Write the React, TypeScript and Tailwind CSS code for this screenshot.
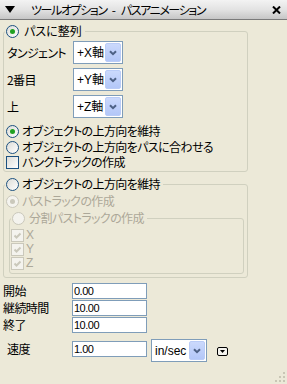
import React from "react";

const JP = "font-['Noto_Sans_CJK_JP',sans-serif] [font-feature-settings:'palt']";
const LAT = "font-['Liberation_Sans','Noto_Sans_CJK_JP',sans-serif]";

function Radio({ checked = false, disabled = false }: { checked?: boolean; disabled?: boolean }) {
  return (
    <span
      className={`w-[13px] h-[13px] rounded-full border shrink-0 flex items-center justify-center ${
        disabled
          ? "border-[#CAC8BB] bg-[#F4F3EE]"
          : "border-[#1C5180] bg-gradient-to-br from-[#DCDCD7] to-white"
      }`}
    >
      {checked && (
        <span
          className={`w-[5px] h-[5px] rounded-full ${disabled ? "bg-[#CAC8BB]" : "bg-[#21A121]"}`}
        />
      )}
    </span>
  );
}

function Check({ checked = false, disabled = false }: { checked?: boolean; disabled?: boolean }) {
  return (
    <span
      className={`w-[13px] h-[13px] border shrink-0 flex items-center justify-center ${
        disabled
          ? "border-[#CAC8BB] bg-[#F4F3EE]"
          : "border-[#1C5180] bg-gradient-to-br from-[#DCDCD7] to-white"
      }`}
    >
      {checked && (
        <svg width="9" height="9" viewBox="0 0 9 9">
          <path
            d="M1.5 4.5 L3.5 6.5 L7.5 2.5"
            fill="none"
            stroke={disabled ? "#CAC8BB" : "#21A121"}
            strokeWidth="2"
          />
        </svg>
      )}
    </span>
  );
}

function DropBtn() {
  return (
    <span className="w-[16px] rounded-[2px] border border-[#BACCF7] bg-gradient-to-b from-[#CBD9FC] to-[#B3C7F8] flex items-center justify-center">
      <svg width="8" height="6" viewBox="0 0 8 6">
        <path d="M1 1.2 L4 4.2 L7 1.2" fill="none" stroke="#4D6185" strokeWidth="2" />
      </svg>
    </span>
  );
}

function Select({ label, width }: { label: string; width: string }) {
  return (
    <div className={`${width} h-[23px] border border-[#7F9DB9] bg-white flex items-stretch p-[1px]`}>
      <span className={`flex-1 pl-[2px] flex items-center text-[12px] tracking-normal text-black ${LAT}`}>{label}</span>
      <DropBtn />
    </div>
  );
}

function Field({ value }: { value: string }) {
  return (
    <div className={`w-[75px] h-[16px] border border-[#7F9DB9] bg-white flex items-center pl-[1px] text-[11px] tracking-[-0.5px] leading-none text-black ${LAT}`}>
      {value}
    </div>
  );
}

export default function App() {
  return (
    <div className={`w-[287px] h-[384px] bg-[#ECE9D8] relative overflow-hidden text-[12px] leading-[14px] tracking-[-0.6px] text-black ${JP}`}>
      {/* title bar */}
      <div className="h-[20px] bg-gradient-to-b from-[#F3F3F3] via-[#E3E3E3] to-[#C6C6C6] border-b border-[#7A7A7A] flex items-center">
        <svg width="10" height="7" viewBox="0 0 10 7" className="ml-[5px]">
          <polygon points="0,0 10,0 5,7" fill="#000" />
        </svg>
        <span className="ml-[16px] leading-none tracking-[-1.4px] flex items-center">
          <span>ツールオプション</span>
          <span className="mx-[5px] tracking-normal">-</span>
          <span>パスアニメーション</span>
        </span>
        <svg width="9" height="8" viewBox="0 0 9 8" className="ml-auto mr-[6px]">
          <path d="M1 0.5 L8 7.5 M8 0.5 L1 7.5" stroke="#000" strokeWidth="2" />
        </svg>
      </div>

      {/* fieldset 1 */}
      <fieldset className="ml-[3px] mt-[4px] w-[245px] border border-[#D0D0BF] rounded-[3px] pb-[2px]">
        <legend className="ml-[1px] px-[1px] h-[14px] flex items-center gap-[5px] leading-[14px]">
          <Radio checked />
          <span className="pr-[2px] tracking-normal">パスに整列</span>
        </legend>
        <div className="pt-[3px] flex flex-col gap-[4px]">
          {[
            ["タンジェント", "+X軸"],
            ["2番目", "+Y軸"],
            ["上", "+Z軸"],
          ].map(([l, v]) => (
            <div key={l} className="h-[23px] flex items-center">
              <span className="w-[69px] pl-[3px]">{l}</span>
              <Select label={v} width="w-[50px]" />
            </div>
          ))}
        </div>
        <div className="mt-[5px] flex flex-col pl-[2px]">
          <div className="h-[16px] flex items-center gap-[3px]">
            <Radio checked />
            <span className="leading-[12px]">オブジェクトの上方向を維持</span>
          </div>
          <div className="h-[16px] flex items-center gap-[3px]">
            <Radio />
            <span className="leading-[12px]">オブジェクトの上方向をパスに合わせる</span>
          </div>
          <div className="h-[14px] flex items-center gap-[3px]">
            <Check />
            <span className="leading-[12px]">バンクトラックの作成</span>
          </div>
        </div>
      </fieldset>

      {/* fieldset 2 */}
      <fieldset className="ml-[3px] mt-[5px] w-[245px] border border-[#D0D0BF] rounded-[3px] pb-[3px]">
        <legend className="ml-[1px] px-[1px] h-[14px] flex items-center gap-[3px] leading-[14px]">
          <Radio />
          <span className="pr-[2px]">オブジェクトの上方向を維持</span>
        </legend>
        <div className="pt-[2px] pl-[2px]">
          <div className="h-[16px] flex items-center gap-[3px] text-[#ACA899]">
            <Radio checked disabled />
            <span>パストラックの作成</span>
          </div>
        </div>
        <fieldset className="ml-[5px] mt-[2px] w-[235px] border border-[#D0D0BF] rounded-[3px] pb-[3px]">
          <legend className="ml-[1px] px-[1px] h-[14px] flex items-center gap-[4px] leading-[14px] text-[#ACA899]">
            <Radio disabled />
            <span className="pr-[2px]">分割パストラックの作成</span>
          </legend>
          <div className="pt-[3px] pl-[1px] flex flex-col text-[#ACA899]">
            {["X", "Y", "Z"].map((a) => (
              <div key={a} className="h-[14px] flex items-center gap-[2px]">
                <Check checked disabled />
                <span className={`${LAT} tracking-normal leading-[12px]`}>{a}</span>
              </div>
            ))}
          </div>
        </fieldset>
      </fieldset>

      {/* fields */}
      <div className="mt-[5px] flex flex-col gap-[1px]">
        {[
          ["開始", "0.00"],
          ["継続時間", "10.00"],
          ["終了", "10.00"],
        ].map(([l, v]) => (
          <div key={l} className="h-[16px] flex items-center">
            <span className="w-[72px] pl-[3px] leading-none">{l}</span>
            <Field value={v} />
          </div>
        ))}
      </div>
      <div className="mt-[6px] h-[23px] flex items-start">
        <span className="w-[72px] pl-[7px] mt-[2px] h-[16px] flex items-center leading-none">速度</span>
        <div className="mt-[2px]">
          <Field value="1.00" />
        </div>
        <div className="ml-[4px]">
          <Select label="in/sec" width="w-[56px]" />
        </div>
        <div className="ml-[10px] mt-[8px] w-[11px] h-[9px] border border-black rounded-[2px] bg-[#F4F3EE] flex items-center justify-center">
          <svg width="5" height="3" viewBox="0 0 5 3">
            <polygon points="0,0 5,0 2.5,3" fill="#000" />
          </svg>
        </div>
      </div>

      {/* resize grip */}
      <div className="absolute right-[2px] bottom-[2px] w-[10px] h-[10px]">
        <svg width="10" height="10" viewBox="0 0 10 10">
          {[
            [8, 0],
            [8, 4],
            [4, 4],
            [8, 8],
            [4, 8],
            [0, 8],
          ].map(([x, y], i) => (
            <rect key={i} x={x} y={y} width="2" height="2" fill="#C9C6B5" />
          ))}
        </svg>
      </div>
    </div>
  );
}
